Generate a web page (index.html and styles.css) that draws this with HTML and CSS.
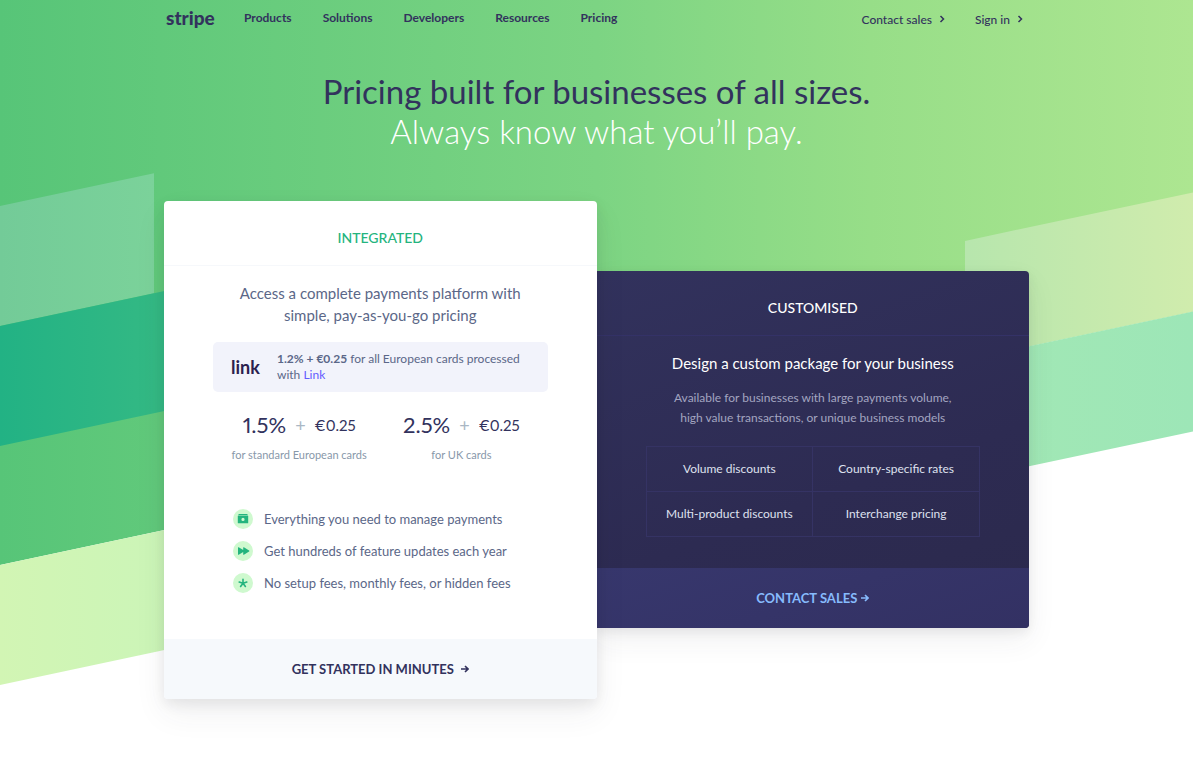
FILE: index.html
```html
<!DOCTYPE html>
<html lang="en-GB">
<head>
<meta charset="utf-8">
<meta name="viewport" content="width=device-width, initial-scale=1">
<title>Stripe pricing</title>
<link rel="stylesheet" href="styles.css">
</head>
<body>
<div class="page">
  <div class="stripes" aria-hidden="true">
    <div class="stripe hero-fill"></div>
    <div class="stripe pale-left"></div>
    <div class="stripe teal"></div>
    <div class="stripe pale-right"></div>
    <div class="stripe lime"></div>
    <div class="stripe mint"></div>
  </div>

  <header class="container site-header">
    <a class="logo" href="#">stripe</a>
    <nav class="main-nav">
      <a href="#">Products</a>
      <a href="#">Solutions</a>
      <a href="#">Developers</a>
      <a href="#">Resources</a>
      <a href="#">Pricing</a>
    </nav>
    <nav class="side-nav">
      <a class="contact" href="#">Contact sales <svg class="chevron" viewBox="0 0 6 8"><path d="M1.5 1l3 3-3 3"/></svg></a>
      <a class="sign-in" href="#">Sign in <svg class="chevron" viewBox="0 0 6 8"><path d="M1.5 1l3 3-3 3"/></svg></a>
    </nav>
  </header>

  <main class="container">
    <h1 class="title">Pricing built for businesses of all sizes.<span>Always know what you’ll pay.</span></h1>

    <div class="plans">
      <section class="card integrated">
        <h2 class="card-title">INTEGRATED</h2>
        <div class="card-body">
          <p class="lead">Access a complete payments platform with simple, pay-as-you-go pricing</p>
          <div class="link-box">
            <span class="link-logo">link</span>
            <p><strong>1.2% + €0.25</strong> for all European cards processed with <a href="#">Link</a></p>
          </div>
          <div class="prices">
            <div class="price">
              <p class="amount"><span class="rate">1.5%</span><span class="plus">+</span><span class="fee">€0.25</span></p>
              <p class="note">for standard European cards</p>
            </div>
            <div class="price">
              <p class="amount"><span class="rate">2.5%</span><span class="plus">+</span><span class="fee">€0.25</span></p>
              <p class="note">for UK cards</p>
            </div>
          </div>
          <ul class="features">
            <li>
              <svg viewBox="0 0 20 20"><circle cx="10" cy="10" r="10"/><path d="M5.5 5h9v1h-9z"/><path fill-rule="evenodd" d="M5.3 6.5h9.4q.5 0 .5.5v6.8q0 .5-.5.5H5.3q-.5 0-.5-.5V7q0-.5.5-.5zM10 8.8a1.6 1.6 0 1 0 0 3.2 1.6 1.6 0 0 0 0-3.2z"/></svg>
              Everything you need to manage payments
            </li>
            <li>
              <svg viewBox="0 0 20 20"><circle cx="10" cy="10" r="10"/><path d="M5 6.7q0-.8.7-.4L10.200 9V6.700q0-.8.7-.4l5.200 3.200q.6.500 0 1l-5.200 3.200q-.7.400-.7-.4V11l-4.500 2.700q-.7.400-.7-.4z"/></svg>
              Get hundreds of feature updates each year
            </li>
            <li>
              <svg viewBox="0 0 20 20"><circle cx="10" cy="10" r="10"/><path class="star" d="M10 10.200V6.200M10 10.200L6.200 9M10 10.200l3.800-1.200M10 10.200l-2.400 3.300M10 10.200l2.400 3.300"/></svg>
              No setup fees, monthly fees, or hidden fees
            </li>
          </ul>
        </div>
        <a class="card-action" href="#">GET STARTED IN MINUTES <svg class="arrow" viewBox="0 0 8 8"><path d="M0 4h6.500M4 1l3 3-3 3"/></svg></a>
      </section>

      <section class="card customised">
        <h2 class="card-title">CUSTOMISED</h2>
        <div class="card-body">
          <p class="lead">Design a custom package for your business</p>
          <p class="detail">Available for businesses with large payments volume, high value transactions, or unique business models</p>
          <ul class="options">
            <li>Volume discounts</li>
            <li>Country-specific rates</li>
            <li>Multi-product discounts</li>
            <li>Interchange pricing</li>
          </ul>
        </div>
        <a class="card-action" href="#">CONTACT SALES <svg class="arrow" viewBox="0 0 8 8"><path d="M0 4h6.500M4 1l3 3-3 3"/></svg></a>
      </section>
    </div>
  </main>
</div>
</body>
</html>
```
FILE: styles.css
```css
* { box-sizing: border-box; }

body {
  margin: 0;
  background: #fff;
  color: #32325d;
  font-family: Lato, "Open Sans", sans-serif;
  font-size: 13px;
}

a { color: inherit; text-decoration: none; }
h1, h2, p, ul { margin: 0; padding: 0; font-weight: 400; }
ul { list-style: none; }

.page {
  position: relative;
  min-height: 100vh;
  overflow: hidden;
}

/* Slanted background bands */
.stripes {
  position: absolute;
  inset: 0 0 auto;
  display: grid;
  grid-template-columns: 154px 1fr 1fr 228px;
  grid-template-rows: 206px 120px 120px 119px 120px;
  transform: skewY(-12deg);
  transform-origin: 0 0;
}
.hero-fill {
  grid-area: 1 / 1 / 5 / 5;
  background: linear-gradient(90deg, #57c578, #7cd483 50%, #97de88 73%, #ade691);
}
.pale-left { grid-area: 2 / 1 / 3 / 2; background: linear-gradient(90deg, #73cb98, #7bd29a); }
.teal { grid-area: 3 / 1 / 4 / 3; margin-right: 200px; background: linear-gradient(90deg, #22b284, #36ba84 50%, #6bcc85); }
.pale-right { grid-area: 4 / 4 / 5 / 5; background: linear-gradient(90deg, #b7e6ad, #d0ecad); }
.lime { grid-area: 5 / 1 / 6 / 3; background: linear-gradient(90deg, #d2f5b4, #c9f5b9 40%); }
.mint { grid-area: 5 / 3 / 6 / 5; background: linear-gradient(90deg, #abebb0, #9de6b7); }

.container {
  position: relative;
  width: 100%;
  max-width: 865px;
  margin: 0 auto;
}

/* Header */
.site-header {
  display: flex;
  align-items: center;
  height: 35px;
  padding: 0 6px 0 2px;
}
.logo {
  width: 78px;
  font-size: 19px;
  font-weight: 900;
  line-height: 24px;
}
.main-nav { display: flex; gap: 31px; font-size: 12px; font-weight: 700; }
.side-nav { display: flex; gap: 30px; margin-left: auto; padding-top: 3px; font-size: 12px; font-weight: 500; }
.side-nav a { display: flex; align-items: center; gap: 7px; }
.chevron { width: 6px; height: 8px; fill: none; stroke: #32325d; stroke-width: 1.5; }

/* Title */
.title {
  padding: 36px 0 48px;
  font-size: 33px;
  line-height: 40px;
  text-align: center;
}
.title span { display: block; color: #fff; font-weight: 300; }

/* Plans */
.plans {
  display: grid;
  grid-template-columns: 1fr 1fr;
  align-items: start;
  padding-bottom: 64px;
}
.card { border-radius: 4px; text-align: center; }
.integrated {
  position: relative;
  margin-top: 2px;
  background: #fff;
  box-shadow: 0 14px 32px rgba(50, 50, 70, .07), 0 5px 14px rgba(0, 0, 0, .08);
}
.customised {
  margin-top: 72px;
  border-radius: 0 4px 4px 0;
  background: linear-gradient(160deg, #32325d, #2d2b52 60%, #2b294c);
  box-shadow: 0 12px 30px rgba(50, 50, 70, .07), 0 4px 12px rgba(0, 0, 0, .07);
  color: #fff;
}
.card-title {
  padding: 26px 0 16px;
  border-bottom: 1px solid #f6f8fb;
  font-size: 14px;
  line-height: 22px;
  font-weight: 500;
}
.integrated .card-title { color: #24b47e; }
.customised .card-title { border-color: #343267; }
.lead { font-size: 15px; line-height: 22px; }
.integrated .card-body { padding: 16px 49px 46px; color: #5b6788; }
.integrated .lead { padding: 0 24px; }

.link-box {
  display: flex;
  align-items: center;
  margin-top: 16px;
  padding: 9px 18px;
  border-radius: 5px;
  background: #f2f3fb;
  text-align: left;
  font-size: 12px;
  line-height: 16px;
}
.link-logo { flex: 0 0 46px; color: #2c1f4f; font-size: 18px; font-weight: 700; }
.link-box a { color: #635bff; }

.prices {
  display: grid;
  grid-template-columns: 1fr 1fr;
  padding: 18px 5px 0;
}
.amount {
  display: flex;
  justify-content: center;
  align-items: center;
  gap: 9px;
  color: #32325d;
  line-height: 30px;
  font-variant-numeric: proportional-nums;
}
.rate { font-size: 22px; }
.plus { color: #aab7c4; font-size: 18px; }
.fee { font-size: 15px; }
.note { margin-top: 7px; color: #8898aa; font-size: 11px; line-height: 16px; }

.features { display: grid; gap: 12px; padding: 46px 0 0 20px; text-align: left; }
.features li { display: flex; align-items: center; gap: 11px; line-height: 20px; }
.features svg { flex: none; width: 20px; height: 20px; fill: #24b47e; }
.features circle { fill: #cff9cf; }
.features .star { fill: none; stroke: #24b47e; stroke-width: 1.600; stroke-linecap: round; }

.card-action {
  display: flex;
  justify-content: center;
  align-items: center;
  gap: 7px;
  height: 60px;
  font-size: 13px;
  font-weight: 700;
}
.integrated .card-action { border-radius: 0 0 4px 4px; background: #f6f9fc; }
.customised .card-action { gap: 4px; border-radius: 0 0 4px 0; background: linear-gradient(160deg, #37376d, #333163); color: #87bbfd; }
.arrow { width: 8px; height: 8px; fill: none; stroke: currentColor; stroke-width: 1.600; }

.customised .card-body { padding: 16px 49px 31px; }
.detail { padding: 14px 20px 0; color: #a3a5c0; font-size: 12px; line-height: 20px; }
.options {
  display: grid;
  grid-template-columns: 1fr 1fr;
  margin-top: 18px;
  border: solid #353364;
  border-width: 1px 0 0 1px;
  color: #dfe1ef;
  font-size: 12px;
}
.options li { padding: 12px 0; border: solid #353364; border-width: 0 1px 1px 0; line-height: 20px; }

@media (max-width: 800px) {
  .plans { grid-template-columns: 1fr; }
  .customised { margin-top: 24px; }
  .main-nav { gap: 12px; }
}
```
